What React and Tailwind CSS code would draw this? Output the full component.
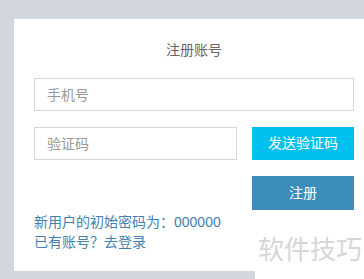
export default function App() {
  return (
    <div
      className="relative w-[364px] h-[279px] overflow-hidden bg-[#d2d6de]"
      style={{ fontFamily: '"Liberation Sans", "Noto Sans CJK SC", sans-serif' }}
    >
      <div className="ml-[14px] mt-[19px] w-[360px] h-[252px] bg-white px-[20px] pt-[21px]">
        <p className="text-center text-[14px] leading-[20px] text-[#666]">注册账号</p>

        <input
          className="mt-[18px] block w-[320px] h-[33px] border border-[#d2d6de] px-[12px] text-[14px] text-[#555] placeholder:text-[#999] outline-none"
          placeholder="手机号"
        />

        <div className="mt-[16px] flex gap-[15px]">
          <input
            className="block w-[203px] h-[33px] border border-[#d2d6de] px-[12px] text-[14px] text-[#555] placeholder:text-[#999] outline-none"
            placeholder="验证码"
          />
          <button className="w-[102px] h-[33px] bg-[#00c0ef] text-white text-[14px]">发送验证码</button>
        </div>

        <div className="mt-[16px] flex justify-end">
          <button className="w-[102px] h-[34px] bg-[#3c8dbc] text-white text-[14px]">注册</button>
        </div>

        <div className="pt-[2px] text-[14px] leading-[20px] text-[#4281b0]">
          <p>新用户的初始密码为：000000</p>
          <p>已有账号？去登录</p>
        </div>
      </div>

      {/* watermark */}
      <div className="absolute left-[255px] top-[232px] w-[109px] h-[47px] bg-white pl-[3px] pt-[2px] text-[26px] leading-[32px] whitespace-nowrap text-[#d6d6d6]">
        软件技巧
      </div>
    </div>
  )
}
